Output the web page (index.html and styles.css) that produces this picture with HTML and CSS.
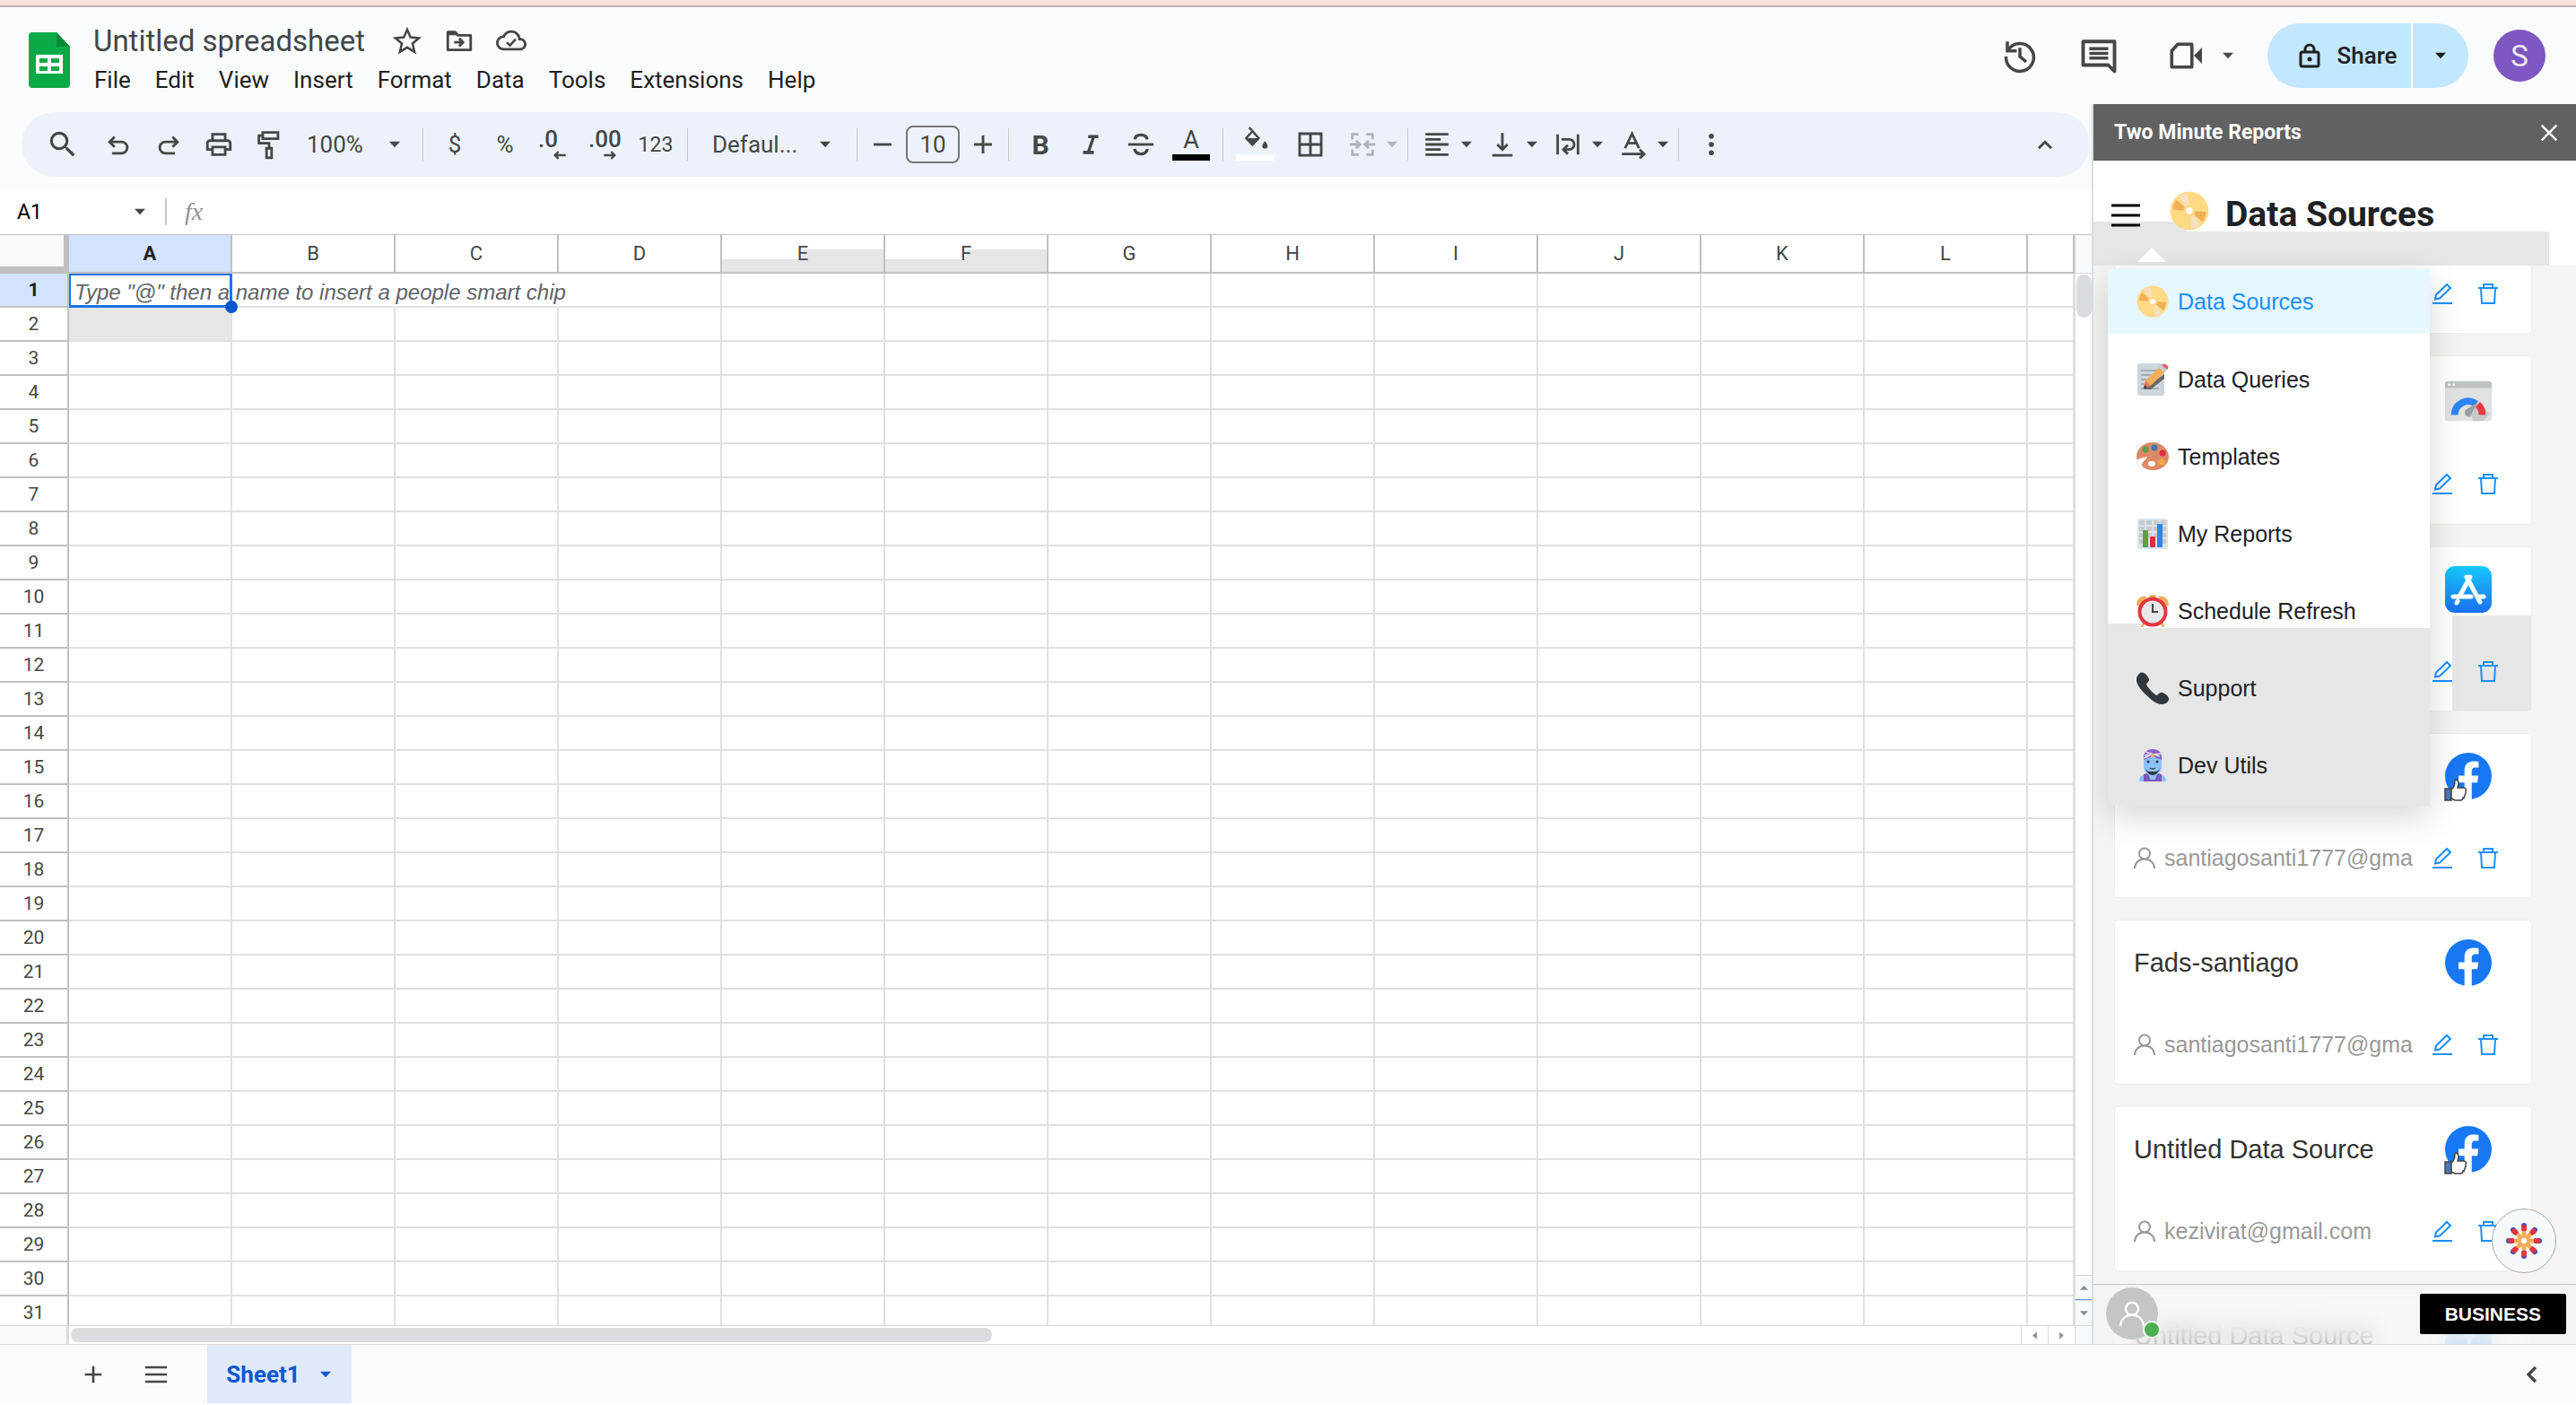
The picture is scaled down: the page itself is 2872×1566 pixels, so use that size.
FILE: index.html
```
<!DOCTYPE html>
<html lang="en">
<head>
    <meta charset="UTF-8">
    <meta name="viewport" content="width=device-width, initial-scale=1.0">
    <title>Untitled spreadsheet</title>
    <link rel="stylesheet" href="styles.css">
</head>
<body>
    <!-- Shared icons -->
    <svg class="sprite" aria-hidden="true">
        <symbol id="i-caret" viewBox="0 0 24 24"><path d="M3 7h18l-9 10z" fill="currentColor"/></symbol>
        <symbol id="i-edit" viewBox="0 0 24 24"><g fill="none" stroke="currentColor" stroke-width="2"><path d="M1 23h22"/><path d="M4 18.500l1-5L17 2l4 4L9 17.500z"/></g></symbol>
        <symbol id="i-trash" viewBox="0 0 24 24"><g fill="none" stroke="currentColor" stroke-width="2"><path d="M1 6h22M7 6V2h10v4M4 6l1 17h14l1-17"/></g></symbol>
        <symbol id="i-user" viewBox="0 0 24 24"><g fill="none" stroke="currentColor" stroke-width="2"><circle cx="12" cy="7.500" r="6"/><path d="M1 24c0-6 4.500-10.500 11-10.500S23 18 23 24"/></g></symbol>
        <symbol id="i-disc" viewBox="0 0 36 36">
            <circle cx="18" cy="18" r="17.500" fill="#ffd983"/>
            <path d="M18 18L6 8A16 16 0 0 0 3 17z" fill="#f0ae58"/>
            <path d="M18 18L30 28a16 16 0 0 0 3-9z" fill="#f0ae58"/>
            <path d="M18 18L8 5a16 16 0 0 1 8-3z" fill="#f5e0c0"/>
            <path d="M18 18l10 13a16 16 0 0 1-8 3z" fill="#f5e0c0"/>
            <circle cx="18" cy="18" r="5.500" fill="#ffd983"/>
            <circle cx="18" cy="18" r="3" fill="#fff"/>
        </symbol>
        <symbol id="i-facebook" viewBox="0 0 36 36">
            <circle cx="18" cy="18" r="18" fill="#1877f2"/>
            <path d="M15 36V23h-4.600v-5.300H15v-4.200c0-4.600 2.700-7 6.900-7 2 0 4 .3 4 .3v4.600h-2.300c-2.300 0-3 1.400-3 2.800v3.500h5.200l-.8 5.300h-4.400v13z" fill="#fff"/>
        </symbol>
        <symbol id="i-thumb" viewBox="0 0 26 26">
            <rect x="1" y="12" width="7" height="13" fill="#4a77b5" stroke="#444" stroke-width="1.500"/>
            <path d="M8 13c3-2 4-5 4-10 0-2 4-1 4 3 0 2-1 4-1 5h7c2 0 3 2 2 4 1 2 0 3-1 4 0 2-1 3-2 3 0 2-1 3-3 3h-6l-4-2z" fill="#fff" stroke="#444" stroke-width="1.500"/>
        </symbol>
    </svg>

    <div class="strip"></div>

    <header class="header">
        <svg class="logo" viewBox="0 0 46 62" aria-hidden="true">
            <path d="M4 0h27l15 16v42a4 4 0 0 1-4 4H4a4 4 0 0 1-4-4V4a4 4 0 0 1 4-4z" fill="#0aab47"/>
            <path d="M31 0l15 16H31z" fill="#078a38"/>
            <path d="M8 25h30v21H8zm4 4v5h9v-5zm13 0v5h9v-5zM12 38v5h9v-5zm13 0v5h9v-5z" fill="#fff" fill-rule="evenodd"/>
        </svg>
        <div class="doc">
            <div class="doc-title">
                <h1>Untitled spreadsheet</h1>
                <button class="doc-button" aria-label="Star"><svg viewBox="0 0 24 24"><path d="M12 3.500l2.600 6.100 6.600.6-5 4.300 1.500 6.500-5.700-3.500L6.300 21l1.500-6.500-5-4.300 6.600-.6z" fill="none" stroke="currentColor" stroke-width="1.800"/></svg></button>
                <button class="doc-button" aria-label="Move"><svg viewBox="0 0 24 24"><path d="M3 5.500h6l2 2.500h10v11.500H3z" fill="none" stroke="currentColor" stroke-width="2" stroke-linejoin="round"/><path d="M3 4.500h6l2 3.500H3z" fill="currentColor"/><path d="M8 13.500h7M12 10.500l3 3-3 3" fill="none" stroke="currentColor" stroke-width="2"/></svg></button>
                <button class="doc-button" aria-label="Saved to Drive"><svg viewBox="0 0 24 24"><path d="M19.350 10.040A7.490 7.490 0 0 0 12 4C9.110 4 6.600 5.640 5.350 8.040A5.994 5.994 0 0 0 0 14c0 3.310 2.690 6 6 6h13c2.760 0 5-2.240 5-5 0-2.640-2.050-4.780-4.650-4.960zM19 18H6c-2.210 0-4-1.790-4-4s1.790-4 4-4h.71A5.500 5.500 0 0 1 17.500 11.500v.5H19a3 3 0 0 1 0 6z" fill="currentColor"/><path d="M8.500 13.500l2.500 2.500 4.500-5" fill="none" stroke="currentColor" stroke-width="1.800"/></svg></button>
            </div>
            <nav class="menubar">
                <button>File</button>
                <button>Edit</button>
                <button>View</button>
                <button>Insert</button>
                <button>Format</button>
                <button>Data</button>
                <button>Tools</button>
                <button>Extensions</button>
                <button>Help</button>
            </nav>
        </div>
        <div class="header-actions">
            <button class="head-icon" aria-label="History"><svg viewBox="0 0 24 24"><g fill="none" stroke="currentColor" stroke-width="2"><path d="M4 3v6h6M4.500 8.500A8.800 8.800 0 1 1 3.200 12.500M12 7v5.500l4 3.500"/></g></svg></button>
            <button class="head-icon" aria-label="Comments"><svg viewBox="0 0 24 24"><path d="M2 18V3h20v19l-4-4z" fill="none" stroke="currentColor" stroke-width="2.200" stroke-linejoin="round"/><path d="M6 7.500h12M6 10.500h12M6 13.500h12" stroke="currentColor" stroke-width="2"/></svg></button>
            <button class="head-icon meet" aria-label="Meet"><svg viewBox="0 0 24 24"><path d="M6 3.500h10.500v17H1.500V8.500z" fill="none" stroke="currentColor" stroke-width="2.400" stroke-linejoin="round"/><path d="M18 12l6-6v12z" fill="currentColor"/></svg><svg class="caret"><use href="#i-caret"/></svg></button>
            <div class="share">
                <button class="share-main"><svg viewBox="0 0 24 28"><rect x="2" y="10" width="20" height="16" rx="2" fill="none" stroke="currentColor" stroke-width="3"/><path d="M7 10V7a5 5 0 0 1 10 0v3" fill="none" stroke="currentColor" stroke-width="3"/><circle cx="12" cy="18" r="2.500" fill="currentColor"/></svg>Share</button>
                <button class="share-more" aria-label="Share options"><svg class="caret"><use href="#i-caret"/></svg></button>
            </div>
            <button class="account" aria-label="Account">S</button>
        </div>
    </header>

    <div class="workspace">
        <main class="sheet">
            <div class="toolbar-wrap">
                <div class="toolbar">
                    <button class="tool search" aria-label="Search"><svg viewBox="0 0 24 24"><path d="M15.500 14h-.79l-.28-.27A6.471 6.471 0 0 0 16 9.500 6.500 6.500 0 1 0 9.500 16c1.610 0 3.090-.59 4.230-1.570l.27.28v.79l5 4.990L20.490 19zm-6 0C7.010 14 5 11.990 5 9.500S7.010 5 9.500 5 14 7.010 14 9.500 11.990 14 9.500 14z" fill="currentColor"/></svg></button>
                    <button class="tool" aria-label="Undo"><svg viewBox="0 0 24 24"><path d="M7 19h7.500a4.500 4.500 0 0 0 0-9H5M9 6l-4 4 4 4" fill="none" stroke="currentColor" stroke-width="2"/></svg></button>
                    <button class="tool" aria-label="Redo"><svg viewBox="0 0 24 24"><path d="M17 19H9.500a4.500 4.500 0 0 1 0-9H19M15 6l4 4-4 4" fill="none" stroke="currentColor" stroke-width="2"/></svg></button>
                    <button class="tool" aria-label="Print"><svg viewBox="0 0 24 24"><path d="M19 8h-1V3H6v5H5c-1.660 0-3 1.340-3 3v6h4v4h12v-4h4v-6c0-1.660-1.340-3-3-3zM8 5h8v3H8V5zm8 12v2H8v-4h8v2zm2-2v-2H6v2H4v-4c0-.55.45-1 1-1h14c.55 0 1 .45 1 1v4h-2z" fill="currentColor"/></svg></button>
                    <button class="tool" aria-label="Paint format"><svg viewBox="0 0 24 24"><g fill="none" stroke="currentColor" stroke-width="2"><path d="M7 2.500h12v5H7zM7 5H4v6h8v4M10 15h4v7.500h-4z"/></g></svg></button>
                    <span class="picker zoom-picker">
                        <select aria-label="Zoom"><option>100%</option></select>
                        <svg class="caret"><use href="#i-caret"/></svg>
                    </span>
                    <span class="divider"></span>
                    <button class="tool">$</button>
                    <button class="tool">%</button>
                    <button class="tool decimal" aria-label="Decrease decimal places">.0<svg viewBox="0 0 24 16"><path d="M22 8H4M10 2L4 8l6 6" fill="none" stroke="currentColor" stroke-width="3.500"/></svg></button>
                    <button class="tool decimal" aria-label="Increase decimal places">.00<svg viewBox="0 0 24 16"><path d="M2 8h18M14 2l6 6-6 6" fill="none" stroke="currentColor" stroke-width="3.500"/></svg></button>
                    <button class="tool small">123</button>
                    <span class="divider"></span>
                    <span class="picker font-picker">
                        <select aria-label="Font"><option>Defaul...</option></select>
                        <svg class="caret"><use href="#i-caret"/></svg>
                    </span>
                    <span class="divider"></span>
                    <button class="tool step" aria-label="Decrease font size"><svg viewBox="0 0 24 24"><path d="M5 12h14" stroke="currentColor" stroke-width="2"/></svg></button>
                    <input class="font-size" aria-label="Font size" value="10">
                    <button class="tool step" aria-label="Increase font size"><svg viewBox="0 0 24 24"><path d="M5 12h14M12 5v14" stroke="currentColor" stroke-width="2"/></svg></button>
                    <span class="divider"></span>
                    <button class="tool bold">B</button>
                    <button class="tool" aria-label="Italic"><svg viewBox="0 0 24 24"><path d="M10 4.500V7h2.700l-3.400 10H6v2.500h8.500V17h-2.700l3.400-10H18V4.500z" fill="currentColor"/></svg></button>
                    <button class="tool" aria-label="Strikethrough"><svg viewBox="0 0 24 24"><path d="M2 12h20" stroke="currentColor" stroke-width="2"/><path d="M17 8c-.5-2.500-2.500-3.500-5-3.500S7.500 5.700 7.200 8M7 15.500c.5 2.500 2.500 4 5 4s5-1.500 5-4" fill="none" stroke="currentColor" stroke-width="2.400"/></svg></button>
                    <button class="tool color text-color" aria-label="Text color"><span>A</span></button>
                    <span class="divider"></span>
                    <button class="tool color fill-color" aria-label="Fill color"><svg viewBox="0 0 24 24"><path d="M8 1l8.500 9.500-6.500 7-6.500-7 5.500-6L6.500 2.500z" fill="currentColor"/><path d="M10 6l4 4.500H6z" fill="#edf2fa"/><path d="M20.500 13s-2.200 2.500-2.200 4a2.200 2.200 0 0 0 4.400 0c0-1.500-2.200-4-2.200-4z" fill="currentColor"/></svg></button>
                    <button class="tool borders" aria-label="Borders"><svg viewBox="0 0 24 24"><path d="M3.500 3.500h17v17h-17zM12 3.500v17M3.500 12h17" fill="none" stroke="currentColor" stroke-width="2"/></svg></button>
                    <button class="tool split off" aria-label="Merge cells"><svg viewBox="0 0 24 24"><g fill="none" stroke="currentColor" stroke-width="2"><path d="M9 4H4v4M15 4h5v4M9 20H4v-4M15 20h5v-4M2 12h7M7 9l3 3-3 3M22 12h-7M17 9l-3 3 3 3"/></g></svg></button>
                    <button class="tool drop off" aria-label="Merge options"><svg class="caret"><use href="#i-caret"/></svg></button>
                    <span class="divider wide"></span>
                    <button class="tool split" aria-label="Horizontal align"><svg viewBox="0 0 24 24"><path d="M3 4h18M3 8h12M3 12h18M3 16h12M3 20h18" stroke="currentColor" stroke-width="2"/></svg></button>
                    <button class="tool drop spaced" aria-label="Horizontal align options"><svg class="caret"><use href="#i-caret"/></svg></button>
                    <button class="tool split" aria-label="Vertical align"><svg viewBox="0 0 24 24"><path d="M12 3v13M8 12l4 4 4-4M4 20.500h16" fill="none" stroke="currentColor" stroke-width="2"/></svg></button>
                    <button class="tool drop spaced" aria-label="Vertical align options"><svg class="caret"><use href="#i-caret"/></svg></button>
                    <button class="tool split" aria-label="Text wrapping"><svg viewBox="0 0 24 24"><path d="M4 4v16M20 4v16M7 8h6a3.500 3.500 0 0 1 0 8H9M12 12.500L8.500 16l3.500 3.500" fill="none" stroke="currentColor" stroke-width="2"/></svg></button>
                    <button class="tool drop spaced" aria-label="Text wrapping options"><svg class="caret"><use href="#i-caret"/></svg></button>
                    <button class="tool split" aria-label="Text rotation"><svg viewBox="0 0 24 24"><path d="M5.500 15L11 3.500 16.500 15M7.500 11h7M3 19.500h17M17 16l3.500 3.500L17 23" fill="none" stroke="currentColor" stroke-width="2"/></svg></button>
                    <button class="tool drop" aria-label="Text rotation options"><svg class="caret"><use href="#i-caret"/></svg></button>
                    <span class="divider wide"></span>
                    <button class="tool" aria-label="More"><svg viewBox="0 0 24 24"><g fill="currentColor"><circle cx="12" cy="5.500" r="2"/><circle cx="12" cy="12" r="2"/><circle cx="12" cy="18.500" r="2"/></g></svg></button>
                    <button class="tool collapse" aria-label="Hide the menus"><svg viewBox="0 0 24 24"><path d="M7 15l5-5 5 5" fill="none" stroke="currentColor" stroke-width="2"/></svg></button>
                </div>
            </div>

            <div class="formula-bar">
                <input class="name-box" aria-label="Name box" value="A1">
                <button class="name-drop" aria-label="Named ranges"><svg class="caret"><use href="#i-caret"/></svg></button>
                <label class="fx" for="formula">fx</label>
                <input class="formula" id="formula">
            </div>

            <div class="grid-row">
                <div class="grid">
                    <table>
                        <thead><tr id="columns"><th class="corner"></th></tr></thead>
                        <tbody id="rows"></tbody>
                    </table>
                </div>
                <div class="vscroll">
                    <div class="vscroll-head"></div>
                    <div class="vscroll-thumb"></div>
                    <button class="vscroll-up" aria-label="Scroll up"><svg viewBox="0 0 24 24"><path d="M12 6l10 11H2z" fill="currentColor"/></svg></button>
                    <button class="vscroll-down" aria-label="Scroll down"><svg viewBox="0 0 24 24"><path d="M2 7h20L12 18z" fill="currentColor"/></svg></button>
                </div>
            </div>
            <div class="hscroll">
                <div class="hscroll-corner"></div>
                <div class="hscroll-track"><div class="hscroll-thumb"></div></div>
                <button aria-label="Scroll left"><svg viewBox="0 0 24 24"><path d="M17 3v18L7 12z" fill="currentColor"/></svg></button>
                <button aria-label="Scroll right"><svg viewBox="0 0 24 24"><path d="M7 3v18l10-9z" fill="currentColor"/></svg></button>
                <div class="hscroll-end"></div>
            </div>
        </main>

        <aside class="panel">
            <div class="panel-bar">
                <h2>Two Minute Reports</h2>
                <button aria-label="Close"><svg viewBox="0 0 24 24"><path d="M2 2l20 20M22 2L2 22" stroke="currentColor" stroke-width="3"/></svg></button>
            </div>
            <div class="panel-body">
                <div class="page-head">
                    <div class="page-title">
                        <button class="burger" aria-label="Menu"><svg viewBox="0 0 32 28"><path d="M0 3h32M0 14h32M0 25h32" stroke="currentColor" stroke-width="3"/></svg></button>
                        <svg class="title-disc"><use href="#i-disc"/></svg>
                        <h3>Data Sources</h3>
                    </div>
                </div>

                <div class="cards">
                    <article class="card cut">
                        <div class="card-foot">
                            <button aria-label="Edit"><svg><use href="#i-edit"/></svg></button>
                            <button aria-label="Delete"><svg><use href="#i-trash"/></svg></button>
                        </div>
                    </article>
                    <article class="card tall">
                        <div class="card-head">
                            <svg class="source-icon" viewBox="0 0 54 48">
                                <rect width="54" height="46" rx="3" fill="#dfe1e3"/>
                                <path d="M0 3a3 3 0 0 1 3-3h48a3 3 0 0 1 3 3v5H0z" fill="#bfc2c3"/>
                                <circle cx="5" cy="4" r="1.500" fill="#fff"/><circle cx="10" cy="4" r="1.500" fill="#fff"/>
                                <path d="M27 34l12-11 12 15-7 8H33z" fill="#c6c8c9"/>
                                <path d="M11 39a16 16 0 0 1 25-13" fill="none" stroke="#2e84f5" stroke-width="8"/>
                                <path d="M38 27a16 16 0 0 1 5 12" fill="none" stroke="#ea3a42" stroke-width="8"/>
                                <path d="M38 24L24 33a5 5 0 0 0 5 8z" fill="#9c9fa0"/>
                            </svg>
                        </div>
                        <div class="card-foot">
                            <button aria-label="Edit"><svg><use href="#i-edit"/></svg></button>
                            <button aria-label="Delete"><svg><use href="#i-trash"/></svg></button>
                        </div>
                    </article>
                    <article class="card shaded-card">
                        <div class="card-head">
                            <svg class="source-icon" viewBox="0 0 52 52">
                                <defs><linearGradient id="store" x2="0" y2="1"><stop offset="0" stop-color="#16c8fb"/><stop offset="1" stop-color="#1a70f0"/></linearGradient></defs>
                                <rect width="52" height="52" rx="11" fill="url(#store)"/>
                                <g stroke="#fff" stroke-width="5" stroke-linecap="round"><path d="M28 12L17 32M24 12l15 28M9 34h20M37 34h6M14 39l-1 2"/></g>
                            </svg>
                        </div>
                        <div class="card-foot">
                            <button aria-label="Edit"><svg><use href="#i-edit"/></svg></button>
                            <button aria-label="Delete"><svg><use href="#i-trash"/></svg></button>
                        </div>
                    </article>
                    <article class="card">
                        <div class="card-head">
                            <span class="source-badge"><svg class="source-icon"><use href="#i-facebook"/></svg><svg class="thumb"><use href="#i-thumb"/></svg></span>
                        </div>
                        <div class="card-foot">
                            <svg class="user"><use href="#i-user"/></svg>
                            <span class="email">santiagosanti1777@gma</span>
                            <button aria-label="Edit"><svg><use href="#i-edit"/></svg></button>
                            <button aria-label="Delete"><svg><use href="#i-trash"/></svg></button>
                        </div>
                    </article>
                    <article class="card">
                        <div class="card-head">
                            <h4>Fads-santiago</h4>
                            <svg class="source-icon"><use href="#i-facebook"/></svg>
                        </div>
                        <div class="card-foot">
                            <svg class="user"><use href="#i-user"/></svg>
                            <span class="email">santiagosanti1777@gma</span>
                            <button aria-label="Edit"><svg><use href="#i-edit"/></svg></button>
                            <button aria-label="Delete"><svg><use href="#i-trash"/></svg></button>
                        </div>
                    </article>
                    <article class="card">
                        <div class="card-head">
                            <h4>Untitled Data Source</h4>
                            <span class="source-badge"><svg class="source-icon"><use href="#i-facebook"/></svg><svg class="thumb"><use href="#i-thumb"/></svg></span>
                        </div>
                        <div class="card-foot">
                            <svg class="user"><use href="#i-user"/></svg>
                            <span class="email">kezivirat@gmail.com</span>
                            <button aria-label="Edit"><svg><use href="#i-edit"/></svg></button>
                            <button aria-label="Delete"><svg><use href="#i-trash"/></svg></button>
                        </div>
                    </article>
                    <article class="card" aria-hidden="true">
                        <div class="card-head">
                            <h4>Untitled Data Source</h4>
                            <svg class="source-icon" viewBox="0 0 52 52"><circle cx="12" cy="34" r="13" fill="#7cbcf5"/><circle cx="42" cy="34" r="13" fill="#7cbcf5"/></svg>
                        </div>
                    </article>
                </div>

                <nav class="popup">
                    <a href="#sources" class="active"><svg><use href="#i-disc"/></svg>Data Sources</a>
                    <a href="#queries"><svg viewBox="0 0 36 36">
                        <rect x="1" width="30" height="36" rx="3" fill="#ccd6dd"/>
                        <path d="M5 8h18M5 13h16M5 18h12M5 23h8M5 28h20" stroke="#99a1a6" stroke-width="1.500"/>
                        <path d="M8 29h8L31 17v-5z" fill="#66696b"/>
                        <path d="M8 28l2-9L27 3l6 5-17 17z" fill="#f0ae58"/>
                        <path d="M8 28l2-9 6 6z" fill="#e9745d"/><path d="M8 28l1-4 3 3z" fill="#333"/>
                        <path d="M25 5l3-3 6 5-3 3z" fill="#c5cbd0"/>
                        <path d="M28 2c2-2 4-2 6 0s2 3 0 5z" fill="#ea596e"/>
                    </svg>Data Queries</a>
                    <a href="#templates"><svg viewBox="0 0 36 36">
                        <path d="M18 2C8 2 0 9 0 18c0 4 1 4 4 2l8-2c-1 3-7 7-6 10 3 4 8 5 13 5 10 0 17-7 17-15S28 2 18 2zm0 21c3 0 4 3 2 5s-7 1-7-2 2-3 5-3z" fill="#dc8a66" fill-rule="evenodd"/>
                        <circle cx="10" cy="10" r="3.500" fill="#5c9e45"/><circle cx="20" cy="8" r="3.500" fill="#3b78ae"/><circle cx="29" cy="14" r="3.500" fill="#dd2e44"/><circle cx="28" cy="24" r="3.500" fill="#f4ab42"/>
                    </svg>Templates</a>
                    <a href="#reports"><svg viewBox="0 0 36 36">
                        <rect x="1" y="1" width="34" height="34" rx="3" fill="#dbe2ea"/>
                        <path d="M3 3h6v5H3zM11 3h6v5h-6zM19 3h6v5h-6zM27 3h6v5h-6zM3 10h6v5H3zM11 10h6v5h-6zM19 10h6v5h-6zM27 10h6v5h-6zM3 17h6v5H3zM11 17h6v5h-6zM19 17h6v5h-6zM27 17h6v5h-6zM3 24h6v5H3zM27 24h6v5h-6z" fill="#c6c9cc"/>
                        <rect x="7" y="14" width="6" height="19" rx="1" fill="#5c9e45"/><rect x="15" y="21" width="6" height="12" rx="1" fill="#dd2e44"/><rect x="23" y="7" width="6" height="26" rx="1" fill="#2f86e6"/>
                    </svg>My Reports</a>
                    <a href="#schedule"><svg viewBox="0 0 36 36">
                        <path d="M0 11C0 4 6 0 12 2L2 13zM36 11C36 4 30 0 24 2l10 11z" fill="#f0ae58"/>
                        <path d="M16 0h4v5h-4zM8 31l-2 5M28 31l2 5" stroke="#f0ae58" stroke-width="3" fill="#f0ae58"/>
                        <circle cx="18" cy="19" r="14.500" fill="#e6e8ea" stroke="#e5353f" stroke-width="4"/>
                        <path d="M18 10v9h6" fill="none" stroke="#444" stroke-width="2"/>
                    </svg>Schedule Refresh</a>
                    <a href="#support"><svg viewBox="0 0 36 36"><path d="M3 2c4-4 9 1 11 6 1 2-3 4-3 6 2 4 8 10 11 12 2 0 4-4 7-3 5 2 9 6 6 10-4 5-12 3-17-1C10 25 4 20 1 13-1 8 0 5 3 2z" fill="#31373d"/></svg>Support</a>
                    <a href="#utils"><svg viewBox="0 0 36 36">
                        <path d="M3 36c0-6 4-8 9-9h12c5 1 9 3 9 9z" fill="#8cc2fb"/>
                        <path d="M8 28l4-1 6 7 6-7 4 1v8H8z" fill="#7a57b8"/>
                        <path d="M13 26h10l-2 8h-6z" fill="#8cc2fb"/>
                        <path d="M8 9h20v10c0 6-4 10-10 10S8 25 8 19z" fill="#8cc2fb"/>
                        <path d="M8 12C7 4 11 0 18 0s11 4 10 12l-10-4z" fill="#8a62c4"/>
                        <path d="M9 7l18-2M10 3l16 5M8 10l7-3" stroke="#e2d8f2" stroke-width="1.500"/>
                        <circle cx="18" cy="7" r="2" fill="#f0ae58"/><circle cx="13" cy="14" r="1.500" fill="#333"/><circle cx="23" cy="14" r="1.500" fill="#333"/>
                        <path d="M9 20c2 5 5 5 9 5s7 0 9-5c-1 4-5 9-9 9s-8-5-9-9z" fill="#31373d"/>
                        <path d="M15 21q3 2 6 0" fill="none" stroke="#31373d" stroke-width="1.500"/>
                    </svg>Dev Utils</a>
                </nav>

                <button class="fab" aria-label="Assistant">
                    <svg viewBox="0 0 40 40">
                        <g id="rays"></g>
                    </svg>
                </button>

                <footer class="panel-foot">
                    <span class="avatar"><svg><use href="#i-user"/></svg><i></i></span>
                    <span class="plan">BUSINESS</span>
                </footer>
            </div>
        </aside>
    </div>

    <footer class="tabs">
        <button class="tab-tool" aria-label="Add sheet"><svg viewBox="0 0 24 24"><path d="M5 12h14M12 5v14" stroke="currentColor" stroke-width="2"/></svg></button>
        <button class="tab-tool" aria-label="All sheets"><svg viewBox="0 0 24 24"><path d="M3 6h18M3 12h18M3 18h18" stroke="currentColor" stroke-width="2"/></svg></button>
        <button class="tab">Sheet1<svg class="caret"><use href="#i-caret"/></svg></button>
        <button class="side-toggle" aria-label="Show side panel"><svg viewBox="0 0 24 24"><path d="M15 6l-6 6 6 6" fill="none" stroke="currentColor" stroke-width="2.500"/></svg></button>
    </footer>

    <script>
        const letters = 'ABCDEFGHIJKL'.split('');
        const columns = document.getElementById('columns');
        const rows = document.getElementById('rows');

        letters.concat('').forEach(letter => {
            const th = document.createElement('th');
            th.textContent = letter;
            if (letter === 'A') th.className = 'selected';
            if (letter === 'E' || letter === 'F') th.className = 'shaded';
            columns.appendChild(th);
        });

        for (let r = 1; r <= 31; r++) {
            const tr = document.createElement('tr');
            const head = document.createElement('th');
            head.textContent = r;
            if (r === 1) head.className = 'selected';
            tr.appendChild(head);
            for (let c = 0; c <= letters.length; c++) {
                tr.appendChild(document.createElement('td'));
            }
            rows.appendChild(tr);
        }

        // Active cell with its smart chip hint
        const first = rows.rows[0].cells;
        first[1].className = 'active-cell';
        first[1].innerHTML = '<span class="hint">Type "@" then a name to insert a people smart chip</span><i class="handle"></i>';
        first[2].className = first[3].className = 'covered';
        rows.rows[1].cells[1].className = 'hovered';

        // Eight petals of the assistant button
        let petals = '';
        for (let a = 0; a < 360; a += 45) {
            petals += `<g transform="rotate(${a} 20 20)"><rect x="17" y="0" width="6" height="8" rx="3" fill="#3b50c8"/><rect x="17" y="2" width="6" height="8" rx="3" fill="#e5353f"/><rect x="17.500" y="9" width="5" height="8" rx="2.500" fill="#f0ae58"/></g>`;
        }
        document.getElementById('rays').innerHTML = petals;
    </script>
</body>
</html>
```
FILE: styles.css
```
* {
    box-sizing: border-box;
}

body {
    margin: 0;
    height: 100vh;
    display: flex;
    flex-direction: column;
    overflow: hidden;
    background: #f9fbfd;
    color: #444746;
    font-family: Roboto, "Liberation Sans", sans-serif;
    font-size: 26px;
}

button,
input,
select {
    margin: 0;
    padding: 0;
    border: 0;
    background: transparent;
    color: inherit;
    font: inherit;
}

button {
    display: flex;
    align-items: center;
    justify-content: center;
    flex: none;
}

h1, h2, h3, h4 {
    margin: 0;
    font-weight: 400;
}

svg {
    flex: none;
}

.sprite {
    position: absolute;
    width: 0;
    height: 0;
}

.caret {
    width: 16px;
    height: 16px;
}

/* Header */
.strip {
    flex: none;
    height: 8px;
    background: #f7e1d8;
    border-bottom: 2px solid #c2b4b0;
}

.header {
    flex: none;
    display: flex;
    height: 108px;
    padding-left: 32px;
}

.logo {
    width: 46px;
    height: 62px;
    margin-top: 28px;
}

.doc {
    padding: 14px 0 0 16px;
}

.doc-title {
    display: flex;
    align-items: center;
    height: 46px;
    padding-left: 10px;
}

.doc-title h1 {
    font-size: 33px;
    margin-right: 18px;
}

.doc-button {
    width: 58px;
    height: 46px;
}

.doc-button svg {
    width: 34px;
    height: 34px;
}

.menubar {
    display: flex;
    color: #1f1f1f;
}

.menubar button {
    height: 42px;
    padding: 0 16px 0 11px;
}

.header-actions {
    display: flex;
    align-items: center;
    margin-left: auto;
    padding-right: 34px;
}

.head-icon {
    width: 88px;
    height: 64px;
}

.head-icon svg {
    width: 42px;
    height: 42px;
}

.head-icon.meet {
    width: 106px;
    gap: 20px;
    margin: 0 20px 0 18px;
}

.head-icon.meet svg {
    width: 38px;
    height: 36px;
}

.head-icon .caret,
.head-icon.meet .caret {
    width: 16px;
    height: 16px;
}

.share {
    display: flex;
    height: 72px;
    margin-right: 28px;
    border-radius: 36px;
    background: #c2e7ff;
    color: #1f1f1f;
    font-weight: 500;
}

.share-main {
    width: 162px;
    gap: 18px;
    border-right: 2px solid #fff;
    padding-left: 20px;
}

.share-main svg {
    width: 24px;
    height: 28px;
}

.share-more {
    width: 62px;
}

.account {
    width: 58px;
    height: 58px;
    border-radius: 50%;
    background: #7e57c2;
    color: #f0e8ee;
    font-size: 33px;
}

/* Main area */
.workspace {
    flex: 1;
    min-height: 0;
    display: flex;
}

.sheet {
    flex: 1;
    min-width: 0;
    display: flex;
    flex-direction: column;
    background: #fff;
}

.toolbar-wrap {
    flex: none;
    padding: 9px 2px 14px 24px;
    background: #f9fbfd;
}

.toolbar {
    display: flex;
    align-items: center;
    height: 72px;
    padding: 0 18px;
    border-radius: 36px;
    background: #edf2fa;
}

.tool {
    width: 56px;
    height: 56px;
}

.tool svg {
    width: 34px;
    height: 34px;
}

.tool.search {
    margin-right: 6px;
}

.tool.search svg {
    width: 38px;
    height: 38px;
}

.tool.small {
    font-size: 23px;
}

.tool .caret,
.picker .caret {
    width: 16px;
    height: 16px;
}

.tool.decimal {
    flex-direction: column;
    align-items: flex-start;
    padding-left: 9px;
    line-height: 24px;
    font-weight: 500;
}

.tool.decimal svg {
    width: 16px;
    height: 12px;
    margin-left: 16px;
}

.divider {
    flex: none;
    width: 1px;
    height: 36px;
    margin: 0 7px;
    background: #c7c7c7;
}

.divider.wide {
    margin: 0 8px;
}

.picker {
    display: flex;
    align-items: center;
    flex: none;
}

.picker select {
    appearance: none;
    flex: 1;
    min-width: 0;
    height: 56px;
}

.zoom-picker {
    width: 136px;
    padding: 0 16px 0 14px;
}

.font-picker {
    width: 174px;
    padding: 0 20px;
}

.tool.step {
    width: 42px;
}

.font-size {
    flex: none;
    width: 60px;
    height: 42px;
    margin: 0 5px;
    border: 2px solid #747775;
    border-radius: 8px;
    text-align: center;
}

.tool.bold {
    font-size: 30px;
    font-weight: 700;
}

.tool.color {
    flex-direction: column;
    justify-content: flex-end;
    padding-bottom: 10px;
}

.color::after {
    content: "";
    width: 42px;
    height: 7px;
    background: #fff;
}

.text-color::after {
    background: #000;
}

.text-color span {
    line-height: 32px;
    font-size: 27px;
}

.fill-color svg {
    height: 32px;
}

.tool.borders {
    margin: 0 6px;
}

.tool.split {
    width: 48px;
}

.tool.drop {
    width: 18px;
}

.tool.spaced {
    margin-right: 7px;
}

.tool.off {
    color: #b0b4b8;
}

.collapse {
    margin-left: auto;
    margin-right: 4px;
}

.formula-bar {
    flex: none;
    display: flex;
    align-items: center;
    height: 51px;
    border-bottom: 1px solid #c0c0c0;
}

.name-box {
    width: 128px;
    padding-left: 19px;
    color: #000;
    font-size: 23px;
}

.name-drop {
    width: 56px;
}

.fx {
    padding-left: 20px;
    border-left: 2px solid #c7c7c7;
    color: #909294;
    font: italic 28px/30px "Liberation Serif", serif;
}

.formula {
    flex: 1;
}

/* Grid */
.grid-row {
    flex: 1;
    min-height: 0;
    display: flex;
}

.grid {
    flex: 1;
    min-width: 0;
    overflow: hidden;
}

table {
    width: 100%;
    table-layout: fixed;
    border-spacing: 0;
}

th,
td {
    height: 38px;
    padding: 0;
    border-right: 2px solid #e1e1e1;
    border-bottom: 2px solid #e1e1e1;
}

th {
    border-color: #c0c0c0;
    background: #fff;
    font-size: 21px;
    font-weight: 400;
}

thead th {
    width: 182px;
    height: 43px;
    font-size: 22px;
}

thead th:last-child {
    width: auto;
}

thead .corner {
    width: 77px;
    border-right: 6px solid #c0c0c0;
    border-bottom: 8px solid #c0c0c0;
    background: #f8f9fa;
}

th.selected {
    background: #d3e3fd;
    color: #1f1f1f;
    font-weight: 700;
}

th.shaded {
    background:
        linear-gradient(#e6e6e6, #e6e6e6) right bottom / 50% 25px no-repeat,
        linear-gradient(#e6e6e6, #e6e6e6) left bottom / 50% 14px no-repeat,
        #fff;
}

.active-cell {
    position: relative;
    border: 2px solid #1a73e8;
    border-width: 2px 3px 3px 2px;
}

.hint {
    position: absolute;
    left: 4px;
    top: 4px;
    color: #5f6368;
    font: italic 24px/30px "Liberation Sans", sans-serif;
    white-space: nowrap;
}

.handle {
    position: absolute;
    right: -9px;
    bottom: -9px;
    width: 14px;
    height: 14px;
    border-radius: 50%;
    background: #0b57d0;
}

.covered {
    border-right-color: #fff;
}

.hovered {
    background: #e6e6e6;
}

.vscroll {
    flex: none;
    display: flex;
    flex-direction: column;
    width: 19px;
    border-left: 1px solid #d9dadc;
}

.vscroll-head {
    height: 43px;
    border-bottom: 1px solid #d9dadc;
    background: #f8f9fa;
}

.vscroll-thumb {
    height: 48px;
    margin: 1px 0 auto 1px;
    border-radius: 9px;
    background: #dadce0;
}

.vscroll button {
    height: 28px;
    border-top: 1px solid #d9dadc;
    background: #f8f9fa;
    color: #8b8e91;
}

.vscroll button svg {
    width: 11px;
    height: 11px;
}

.vscroll .vscroll-up {
    border-bottom: 1px solid #5a9bf0;
}

.hscroll {
    flex: none;
    display: flex;
    align-items: center;
    height: 21px;
    border-top: 1px solid #d9dadc;
    color: #8b8e91;
}

.hscroll-corner {
    width: 77px;
    height: 20px;
    border-right: 3px solid #d9dadc;
    background: #f8f9fa;
}

.hscroll-track {
    flex: 1;
    padding-left: 2px;
}

.hscroll-thumb {
    width: 47.25%;
    height: 16px;
    border-radius: 8px;
    background: #dadce0;
}

.hscroll button {
    width: 30px;
    height: 20px;
    border-left: 1px solid #d9dadc;
}

.hscroll button svg {
    width: 11px;
    height: 11px;
}

.hscroll-end {
    width: 19px;
    height: 20px;
    border-left: 1px solid #d9dadc;
    background: #f8f9fa;
}

/* Side panel */
.panel {
    flex: none;
    display: flex;
    flex-direction: column;
    width: 540px;
    border-left: 2px solid #dadce0;
    background: #f5f4f2;
    color: #202124;
    font-family: "Liberation Sans", sans-serif;
    font-size: 25px;
}

.panel-bar {
    flex: none;
    display: flex;
    align-items: center;
    justify-content: space-between;
    height: 63px;
    padding: 0 20px 0 23px;
    background: #616161;
    color: #fff;
}

.panel-bar h2 {
    font-family: Roboto, sans-serif;
    font-size: 23px;
    font-weight: 700;
}

.panel-bar svg {
    display: block;
    width: 20px;
    height: 20px;
}

.panel-body {
    position: relative;
    flex: 1;
    min-height: 0;
    overflow: hidden;
}

.page-head {
    height: 117px;
    background:
        linear-gradient(#e6e6e6, #e6e6e6) left bottom / 508px 38px no-repeat,
        linear-gradient(#e6e6e6, #e6e6e6) left bottom / 104px 49px no-repeat,
        #fff;
}

.page-title {
    display: flex;
    align-items: center;
    padding: 30px 0 0 20px;
}

.burger svg {
    width: 32px;
    height: 28px;
    margin-top: 10px;
    color: #000;
}

.title-disc {
    width: 44px;
    height: 44px;
    margin: 0 18px 0 33px;
}

.page-title h3 {
    padding-top: 8px;
    font-family: Roboto, sans-serif;
    font-size: 39px;
    font-weight: 700;
    line-height: 44px;
}

.cards {
    display: flex;
    flex-direction: column;
    gap: 24px;
    padding: 0 49px 0 23px;
}

.card {
    flex: none;
    height: 184px;
    padding: 21px 36px 0 21px;
    border: 1px solid #efeeec;
    border-radius: 4px;
    background: #fff;
}

.card.cut {
    height: 76px;
    padding-top: 14px;
    border-top: 0;
}

.card.tall {
    height: 189px;
    padding-top: 25px;
}

.shaded-card {
    background: linear-gradient(#e6e6e6, #e6e6e6) right bottom / 88px 106px no-repeat, #fff;
}

.card-head {
    display: flex;
    align-items: center;
    height: 52px;
    margin-bottom: 48px;
    padding-right: 8px;
}

.card-head h4 {
    color: #333;
    font-size: 29px;
}

.source-badge,
.card-head > .source-icon {
    margin-left: auto;
}

.source-icon {
    display: block;
    width: 52px;
    height: 52px;
}

.source-badge {
    position: relative;
}

.thumb {
    position: absolute;
    left: -1px;
    bottom: -2px;
    width: 26px;
    height: 26px;
}

.card-foot {
    display: flex;
    align-items: center;
    justify-content: flex-end;
    height: 34px;
}

.card-foot button {
    margin-left: 27px;
    color: #1890ff;
}

.card-foot .email + button {
    margin-left: 14px;
}

.card-foot button svg,
.user {
    width: 24px;
    height: 24px;
}

.user {
    color: #999;
}

.email {
    flex: 1;
    overflow: hidden;
    margin-left: 10px;
    color: #999;
    white-space: nowrap;
}

.popup {
    position: absolute;
    left: 16px;
    top: 121px;
    width: 359px;
    height: 598px;
    background:
        linear-gradient(#e6e6e6, #e6e6e6) left bottom / 100% 198px no-repeat,
        linear-gradient(#e6e6e6, #e6e6e6) left bottom / 36px 203px no-repeat,
        #fff;
    box-shadow: 0 12px 36px rgba(0, 0, 0, 0.16);
}

/* Pointer of the popup */
.popup::before {
    content: "";
    position: absolute;
    left: 33px;
    top: -24px;
    border: 16px solid transparent;
    border-top: 0;
    border-bottom: 16px solid #fff;
}

.popup a {
    display: flex;
    align-items: center;
    gap: 10px;
    height: 72px;
    margin-bottom: 14px;
    padding-left: 32px;
    color: #202124;
    text-decoration: none;
}

.popup a.active {
    margin-bottom: 15px;
    background: #e6f7ff;
    color: #1890ff;
}

.popup svg {
    width: 36px;
    height: 36px;
}

.fab {
    position: absolute;
    z-index: 2;
    right: 22px;
    bottom: 79px;
    width: 72px;
    height: 72px;
    border: 1px solid #a8abae;
    border-radius: 50%;
    background: #f6f9fb;
}

.fab svg {
    width: 40px;
    height: 40px;
}

.panel-foot {
    position: absolute;
    left: 0;
    right: 0;
    bottom: 0;
    display: flex;
    align-items: center;
    justify-content: space-between;
    height: 67px;
    padding: 0 11px 2px 14px;
    border-top: 1px solid #c4c5c4;
    background: rgba(245, 244, 243, 0.6);
    backdrop-filter: blur(12px);
}

.avatar {
    position: relative;
    display: flex;
    align-items: center;
    justify-content: center;
    width: 58px;
    height: 58px;
    border-radius: 50%;
    background: #c4c5c5;
    color: #fff;
}

.avatar svg {
    width: 28px;
    height: 28px;
}

.avatar i {
    position: absolute;
    right: -3px;
    bottom: 1px;
    width: 20px;
    height: 20px;
    border: 2px solid #f3f3f2;
    border-radius: 50%;
    background: #4caf50;
}

.plan {
    padding: 0 28px;
    border-radius: 2px;
    background: #000;
    color: #fff;
    font-size: 21px;
    font-weight: 700;
    line-height: 45px;
}

/* Sheet tabs */
.tabs {
    flex: none;
    display: flex;
    height: 68px;
    padding-left: 69px;
    border-top: 1px solid #dadce0;
    border-bottom: 2px solid #fff;
}

.tab-tool {
    width: 70px;
}

.tab-tool svg {
    width: 32px;
    height: 32px;
}

.tab {
    width: 161px;
    gap: 20px;
    margin-left: 22px;
    background: #dfe9f8;
    color: #0b57d0;
    font-weight: 700;
}

.side-toggle {
    margin-left: auto;
    padding-right: 33px;
}

.side-toggle svg {
    width: 32px;
    height: 32px;
}
```
